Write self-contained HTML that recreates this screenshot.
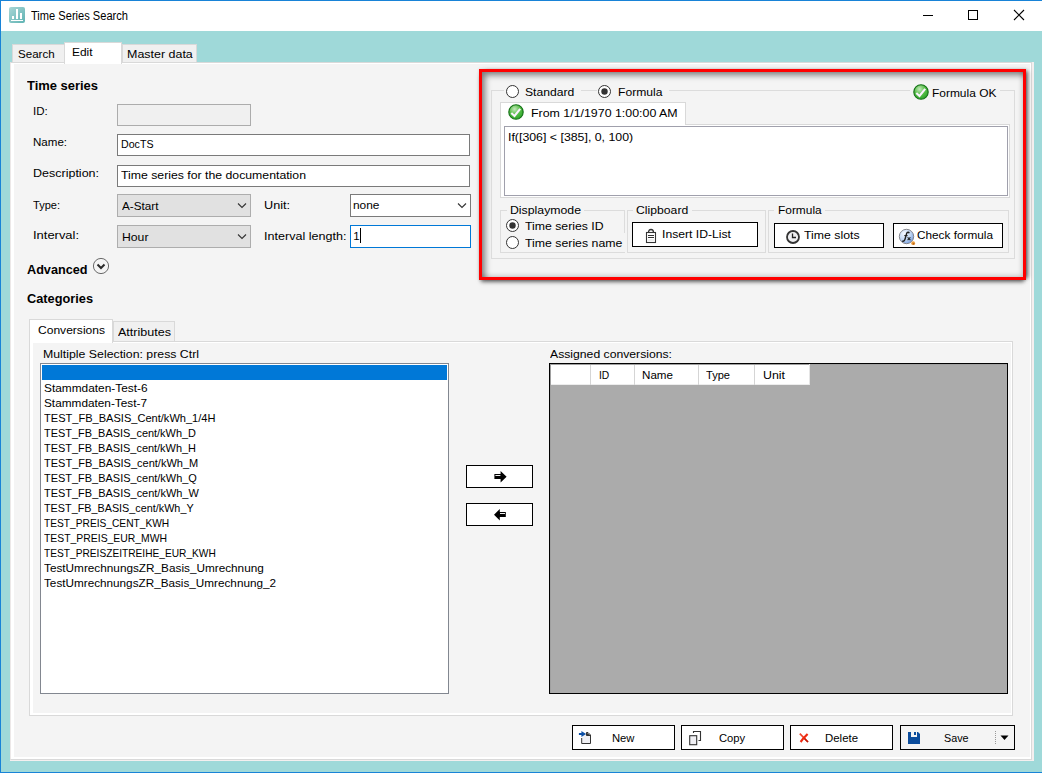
<!DOCTYPE html>
<html><head><meta charset="utf-8"><style>
html,body{margin:0;padding:0;}
body{width:1042px;height:773px;position:relative;overflow:hidden;font-family:"Liberation Sans",sans-serif;color:#000;background:#9fd9d9;}
.a{position:absolute;}
.t{position:absolute;white-space:nowrap;transform-origin:0 0;}
</style></head><body>
<div class="a" style="left:0px;top:0px;width:1042px;height:773px;background:#9fd9d9;"></div>
<div class="a" style="left:0px;top:0px;width:1042px;height:31px;background:#ffffff;"></div>
<div class="a" style="left:0px;top:0px;width:1042px;height:1px;background:#1883d7;"></div>
<div class="a" style="left:0px;top:0px;width:1px;height:773px;background:#1883d7;"></div>
<div class="a" style="left:0px;top:772px;width:1042px;height:1px;background:#1883d7;"></div>
<svg class="a" style="left:9px;top:7px" width="16" height="16" viewBox="0 0 16 16">
<defs><linearGradient id="ig" x1="0" y1="0" x2="1" y2="1"><stop offset="0" stop-color="#a9d6d6"/><stop offset="1" stop-color="#5fb3b3"/></linearGradient></defs>
<rect x="0" y="0" width="16" height="16" rx="2" fill="url(#ig)"/>
<rect x="3" y="9" width="2" height="3" fill="#fff"/><rect x="7" y="2" width="2" height="10" fill="#fff"/><rect x="11" y="6" width="2" height="6" fill="#fff"/>
<rect x="2" y="13" width="12" height="1" fill="#fff"/></svg>
<div class="t" style="left:30.50px;top:6.00px;font-size:12px;line-height:20px;transform:scaleX(0.9242);">Time Series Search</div>
<div class="a" style="left:923px;top:15px;width:10px;height:1px;background:#000;"></div>
<div class="a" style="left:968px;top:10px;width:10px;height:10px;border:1px solid #000;box-sizing:border-box;"></div>
<svg class="a" style="left:1013px;top:9px" width="12" height="12" viewBox="0 0 12 12"><path d="M1 1L11 11M11 1L1 11" stroke="#000" stroke-width="1.1"/></svg>
<div class="a" style="left:10px;top:62px;width:1024px;height:699px;background:#f4efef;"></div>
<div class="a" style="left:10px;top:62px;width:1022px;height:698px;background:#ffffff;border-top:1px solid #d9d9d9;border-right:1px solid #d9d9d9;border-bottom:1px solid #d9d9d9;border-left:1px solid #ece8e8;box-sizing:border-box;"></div>
<div class="a" style="left:14px;top:64px;width:1016px;height:693px;background:#f4f4f4;"></div>
<div class="a" style="left:12px;top:44px;width:53px;height:18px;background:#f0f0f0;border:1px solid #d9d9d9;border-bottom:none;box-sizing:border-box;"></div>
<div class="a" style="left:122px;top:44px;width:75px;height:18px;background:#f0f0f0;border:1px solid #d9d9d9;border-bottom:none;box-sizing:border-box;"></div>
<div class="a" style="left:64px;top:42px;width:58px;height:22px;background:#ffffff;border:1px solid #d9d9d9;border-bottom:none;box-sizing:border-box;"></div>
<div class="t" style="left:17.60px;top:44.00px;font-size:11.5px;line-height:20px;transform:scaleX(1.0069);">Search</div>
<div class="t" style="left:72.40px;top:42.00px;font-size:11.5px;line-height:20px;transform:scaleX(1.0354);">Edit</div>
<div class="t" style="left:126.50px;top:44.00px;font-size:11.5px;line-height:20px;transform:scaleX(1.0831);">Master data</div>
<div class="t" style="left:27.00px;top:76.00px;font-size:12.5px;line-height:20px;font-weight:bold;-webkit-text-stroke:0;transform:scaleX(1.0357);">Time series</div>
<div class="t" style="left:33.25px;top:101.00px;font-size:11.5px;line-height:20px;transform:scaleX(1.0034);">ID:</div>
<div class="t" style="left:33.25px;top:132.00px;font-size:11.5px;line-height:20px;transform:scaleX(1.0044);">Name:</div>
<div class="t" style="left:33.25px;top:163.00px;font-size:11.5px;line-height:20px;transform:scaleX(1.0873);">Description:</div>
<div class="t" style="left:33.25px;top:195.00px;font-size:11.5px;line-height:20px;transform:scaleX(0.9591);">Type:</div>
<div class="t" style="left:33.25px;top:225.00px;font-size:11.5px;line-height:20px;transform:scaleX(1.1247);">Interval:</div>
<div class="a" style="left:117px;top:104px;width:134px;height:22px;background:#f0f0f0;border:1px solid #acacac;box-sizing:border-box;"></div>
<div class="a" style="left:117px;top:134px;width:353px;height:22px;background:#ffffff;border:1px solid #7a7a7a;box-sizing:border-box;"></div>
<div class="t" style="left:120.50px;top:134.00px;font-size:11.5px;line-height:20px;transform:scaleX(0.9246);">DocTS</div>
<div class="a" style="left:117px;top:165px;width:353px;height:22px;background:#ffffff;border:1px solid #7a7a7a;box-sizing:border-box;"></div>
<div class="t" style="left:120.50px;top:165.00px;font-size:11.5px;line-height:20px;transform:scaleX(1.0666);">Time series for the documentation</div>
<div class="a" style="left:117px;top:194px;width:134px;height:23px;background:#e1e1e1;border:1px solid #adadad;box-sizing:border-box;"></div>
<div class="t" style="left:121.50px;top:196.00px;font-size:11.5px;line-height:20px;transform:scaleX(1.0196);">A-Start</div>
<svg class="a" style="left:236.5px;top:203px" width="10" height="6" viewBox="0 0 10 6"><path d="M1 0.5L5 4.5L9 0.5" fill="none" stroke="#333" stroke-width="1.1"/></svg>
<div class="a" style="left:117px;top:225px;width:134px;height:23px;background:#e1e1e1;border:1px solid #adadad;box-sizing:border-box;"></div>
<div class="t" style="left:121.50px;top:227.00px;font-size:11.5px;line-height:20px;transform:scaleX(1.0621);">Hour</div>
<svg class="a" style="left:236.5px;top:234px" width="10" height="6" viewBox="0 0 10 6"><path d="M1 0.5L5 4.5L9 0.5" fill="none" stroke="#333" stroke-width="1.1"/></svg>
<div class="t" style="left:264.20px;top:195.00px;font-size:11.5px;line-height:20px;transform:scaleX(1.0994);">Unit:</div>
<div class="t" style="left:264.20px;top:226.00px;font-size:11.5px;line-height:20px;transform:scaleX(1.0921);">Interval length:</div>
<div class="a" style="left:350px;top:194px;width:121px;height:23px;background:#ffffff;border:1px solid #7a7a7a;box-sizing:border-box;"></div>
<div class="t" style="left:353.30px;top:195.00px;font-size:11.5px;line-height:20px;transform:scaleX(1.0352);">none</div>
<svg class="a" style="left:456.5px;top:203px" width="10" height="6" viewBox="0 0 10 6"><path d="M1 0.5L5 4.5L9 0.5" fill="none" stroke="#333" stroke-width="1.1"/></svg>
<div class="a" style="left:350px;top:225px;width:121px;height:23px;background:#ffffff;border:1px solid #0078d7;box-sizing:border-box;"></div>
<div class="t" style="left:353.30px;top:226.00px;font-size:11.5px;line-height:20px;">1</div>
<div class="a" style="left:360px;top:228px;width:1px;height:15px;background:#000;"></div>
<div class="t" style="left:27.00px;top:260.00px;font-size:12.5px;line-height:20px;font-weight:bold;-webkit-text-stroke:0;transform:scaleX(1.0126);">Advanced</div>
<svg class="a" style="left:92px;top:257px" width="18" height="18" viewBox="0 0 18 18"><circle cx="9" cy="9" r="7.6" fill="none" stroke="#6a6a6a" stroke-width="1"/><path d="M5.5 7.5L9 11L12.5 7.5" fill="none" stroke="#2a2a2a" stroke-width="2"/></svg>
<div class="t" style="left:27.00px;top:289.00px;font-size:12.5px;line-height:20px;font-weight:bold;-webkit-text-stroke:0;transform:scaleX(1.0217);">Categories</div>
<div class="a" style="left:29px;top:341px;width:984px;height:375px;background:#ffffff;border:1px solid #d9d9d9;box-sizing:border-box;"></div>
<div class="a" style="left:33px;top:343px;width:978px;height:370px;background:#f4f4f4;"></div>
<div class="a" style="left:113px;top:321px;width:62px;height:20px;background:#f0f0f0;border:1px solid #d9d9d9;border-bottom:none;box-sizing:border-box;"></div>
<div class="a" style="left:29px;top:319px;width:84px;height:24px;background:#ffffff;border:1px solid #d9d9d9;border-bottom:none;box-sizing:border-box;"></div>
<div class="t" style="left:37.50px;top:320.00px;font-size:11.5px;line-height:20px;transform:scaleX(1.0485);">Conversions</div>
<div class="t" style="left:117.50px;top:322.00px;font-size:11.5px;line-height:20px;transform:scaleX(1.0905);">Attributes</div>
<div class="t" style="left:42.50px;top:344.00px;font-size:11.5px;line-height:20px;transform:scaleX(1.0707);">Multiple Selection: press Ctrl</div>
<div class="a" style="left:40px;top:363px;width:409px;height:331px;background:#ffffff;border:1px solid #828790;box-sizing:border-box;"></div>
<div class="a" style="left:42px;top:365px;width:405px;height:15px;background:#0078d7;"></div>
<div class="t" style="left:44.20px;top:378.00px;font-size:11.5px;line-height:20px;transform:scaleX(1.0314);">Stammdaten-Test-6</div>
<div class="t" style="left:44.20px;top:393.00px;font-size:11.5px;line-height:20px;transform:scaleX(1.0264);">Stammdaten-Test-7</div>
<div class="t" style="left:44.20px;top:408.00px;font-size:11.5px;line-height:20px;transform:scaleX(0.9616);">TEST_FB_BASIS_Cent/kWh_1/4H</div>
<div class="t" style="left:44.20px;top:423.00px;font-size:11.5px;line-height:20px;transform:scaleX(0.9512);">TEST_FB_BASIS_cent/kWh_D</div>
<div class="t" style="left:44.20px;top:438.00px;font-size:11.5px;line-height:20px;transform:scaleX(0.9512);">TEST_FB_BASIS_cent/kWh_H</div>
<div class="t" style="left:44.20px;top:453.00px;font-size:11.5px;line-height:20px;transform:scaleX(0.9575);">TEST_FB_BASIS_cent/kWh_M</div>
<div class="t" style="left:44.20px;top:468.00px;font-size:11.5px;line-height:20px;transform:scaleX(0.9529);">TEST_FB_BASIS_cent/kWh_Q</div>
<div class="t" style="left:44.20px;top:483.00px;font-size:11.5px;line-height:20px;transform:scaleX(0.9535);">TEST_FB_BASIS_cent/kWh_W</div>
<div class="t" style="left:44.20px;top:498.00px;font-size:11.5px;line-height:20px;transform:scaleX(0.9400);">TEST_FB_BASIS_cent/kWh_Y</div>
<div class="t" style="left:44.20px;top:513.00px;font-size:11.5px;line-height:20px;transform:scaleX(0.8867);">TEST_PREIS_CENT_KWH</div>
<div class="t" style="left:44.20px;top:528.00px;font-size:11.5px;line-height:20px;transform:scaleX(0.9045);">TEST_PREIS_EUR_MWH</div>
<div class="t" style="left:44.20px;top:543.00px;font-size:11.5px;line-height:20px;transform:scaleX(0.8844);">TEST_PREISZEITREIHE_EUR_KWH</div>
<div class="t" style="left:44.20px;top:558.00px;font-size:11.5px;line-height:20px;transform:scaleX(1.0235);">TestUmrechnungsZR_Basis_Umrechnung</div>
<div class="t" style="left:44.20px;top:573.00px;font-size:11.5px;line-height:20px;transform:scaleX(1.0196);">TestUmrechnungsZR_Basis_Umrechnung_2</div>
<div class="a" style="left:466px;top:465px;width:67px;height:23px;background:#ffffff;border:1px solid #000;box-sizing:border-box;"></div>
<div class="a" style="left:466px;top:503px;width:67px;height:23px;background:#ffffff;border:1px solid #000;box-sizing:border-box;"></div>
<svg class="a" style="left:493px;top:470px" width="16" height="14" viewBox="0 0 16 14"><path d="M1.4 4H7.6V1L13.6 6.8L7.6 12.6V9H1.4Z" fill="#000"/><rect x="2.4" y="5" width="5" height="1" fill="#eee"/></svg>
<svg class="a" style="left:492px;top:508px" width="16" height="14" viewBox="0 0 16 14"><path d="M13.8 4H7.8V1L2 6.8L7.8 12.6V9H13.8Z" fill="#000"/><rect x="8" y="5" width="5" height="1" fill="#eee"/></svg>
<div class="t" style="left:550.20px;top:344.00px;font-size:11.5px;line-height:20px;transform:scaleX(1.0604);">Assigned conversions:</div>
<div class="a" style="left:549px;top:363px;width:459px;height:331px;background:#ababab;border:1px solid #000;box-sizing:border-box;"></div>
<div class="a" style="left:550px;top:365px;width:260px;height:20px;background:#ffffff;"></div>
<div class="a" style="left:550px;top:364px;width:457px;height:1px;background:#a0a0a0;"></div>
<div class="a" style="left:550px;top:364px;width:1px;height:329px;background:#a0a0a0;"></div>
<div class="a" style="left:551px;top:384px;width:259px;height:1px;background:#ececec;"></div>
<div class="a" style="left:590px;top:365px;width:1px;height:20px;background:#d5d5d5;"></div>
<div class="a" style="left:634px;top:365px;width:1px;height:20px;background:#d5d5d5;"></div>
<div class="a" style="left:698px;top:365px;width:1px;height:20px;background:#d5d5d5;"></div>
<div class="a" style="left:754px;top:365px;width:1px;height:20px;background:#d5d5d5;"></div>
<div class="a" style="left:809px;top:364px;width:1px;height:21px;background:#e5e5e5;"></div>
<div class="t" style="left:598.70px;top:365.00px;font-size:11.5px;line-height:20px;transform:scaleX(0.8957);">ID</div>
<div class="t" style="left:642.30px;top:365.00px;font-size:11.5px;line-height:20px;transform:scaleX(1.0098);">Name</div>
<div class="t" style="left:706.00px;top:365.00px;font-size:11.5px;line-height:20px;transform:scaleX(0.9619);">Type</div>
<div class="t" style="left:762.50px;top:365.00px;font-size:11.5px;line-height:20px;transform:scaleX(1.0758);">Unit</div>
<div class="a" style="left:572px;top:725px;width:103px;height:25px;background:#fff;border:1px solid #000;box-sizing:border-box;"></div>
<div class="a" style="left:681px;top:725px;width:103px;height:25px;background:#fff;border:1px solid #000;box-sizing:border-box;"></div>
<div class="a" style="left:790px;top:725px;width:103px;height:25px;background:#fff;border:1px solid #000;box-sizing:border-box;"></div>
<div class="a" style="left:900px;top:725px;width:115px;height:25px;background:#f4f4f4;border:1px solid #000;box-sizing:border-box;"></div>
<div class="t" style="left:611.50px;top:728.00px;font-size:11.5px;line-height:20px;transform:scaleX(0.9761);">New</div>
<div class="t" style="left:718.50px;top:728.00px;font-size:11.5px;line-height:20px;transform:scaleX(0.9758);">Copy</div>
<div class="t" style="left:824.70px;top:728.00px;font-size:11.5px;line-height:20px;transform:scaleX(0.9925);">Delete</div>
<div class="t" style="left:944.00px;top:728.00px;font-size:11.5px;line-height:20px;transform:scaleX(0.9389);">Save</div>
<svg class="a" style="left:578px;top:730px" width="14" height="15" viewBox="0 0 14 15"><path d="M3.7 8V13.5H12.5V5L10 2.5H8.5" fill="#f0f0f4" stroke="#333" stroke-width="1"/><path d="M8.5 2.5V5.5H12.5" fill="#333" stroke="#333" stroke-width="1"/><path d="M0.9 2.9H3.4V0.9L8.1 4L3.4 7.1V5.1H0.9Z" fill="#0c4fa6"/></svg>
<svg class="a" style="left:688px;top:730px" width="14" height="16" viewBox="0 0 14 16"><path d="M5.5 3V1.5H12.5V10.5H10.5" fill="none" stroke="#333" stroke-width="1.1"/><rect x="1.7" y="5.7" width="7" height="9" fill="#f0f0f4" stroke="#333" stroke-width="1.1"/></svg>
<svg class="a" style="left:798px;top:732px" width="12" height="12" viewBox="0 0 12 12"><path d="M1.8 1.6L10 10" stroke="#f0452a" stroke-width="1.7"/><path d="M9.6 2L5 6.8L2.6 10" stroke="#f02a10" stroke-width="2.1"/><path d="M6.5 6.5L10 10" stroke="#c01808" stroke-width="1.5"/></svg>
<svg class="a" style="left:908px;top:732px" width="12" height="12" viewBox="0 0 12 12"><path d="M0 0H3V5H9V0H10L12 2V12H0Z" fill="#0b4c9c"/><rect x="6" y="0" width="2" height="3" fill="#0b4c9c"/></svg>
<svg class="a" style="left:995px;top:731px" width="1" height="13"><path d="M0.5 0V13" stroke="#999" stroke-dasharray="1 1"/></svg>
<svg class="a" style="left:1000px;top:735px" width="9" height="6" viewBox="0 0 9 6"><path d="M0.5 0.5H8.5L4.5 5Z" fill="#000"/></svg>
<div class="a" style="left:482px;top:72px;width:541px;height:205px;box-shadow: inset 5px 5px 6px -2px rgba(0,0,0,0.5), inset -3px -3px 5px -2px rgba(0,0,0,0.22);"></div>
<div class="a" style="left:479px;top:69px;width:547px;height:211px;border:3px solid #ff0000;box-sizing:border-box;box-shadow: 0 0 3px rgba(0,0,0,0.15), 4px 0 4px -2px rgba(0,0,0,0.55), 0 4px 4px -2px rgba(0,0,0,0.55);"></div>
<div class="a" style="left:491px;top:90px;width:524px;height:169px;border:1px solid #dcdcdc;box-sizing:border-box;"></div>
<div class="a" style="left:504px;top:84px;width:77px;height:16px;background:#f4f4f4;"></div>
<div class="a" style="left:597px;top:84px;width:72px;height:16px;background:#f4f4f4;"></div>
<div class="a" style="left:910px;top:84px;width:90px;height:16px;background:#f4f4f4;"></div>
<svg class="a" style="left:506px;top:85px" width="13" height="13" viewBox="0 0 13 13"><circle cx="6.5" cy="6.5" r="6" fill="#fff" stroke="#333" stroke-width="1"/></svg>
<div class="t" style="left:525.10px;top:82.00px;font-size:11.5px;line-height:20px;transform:scaleX(1.0557);">Standard</div>
<svg class="a" style="left:598px;top:85px" width="13" height="13" viewBox="0 0 13 13"><circle cx="6.5" cy="6.5" r="6" fill="#fff" stroke="#333" stroke-width="1"/><circle cx="6.5" cy="6.5" r="3.2" fill="#333"/></svg>
<div class="t" style="left:617.50px;top:82.00px;font-size:11.5px;line-height:20px;transform:scaleX(1.0545);">Formula</div>
<svg class="a" style="left:913px;top:84px" width="16" height="16" viewBox="0 0 16 16"><defs><radialGradient id="cg913" cx="0.4" cy="0.3" r="0.8"><stop offset="0" stop-color="#c4e8bc"/><stop offset="0.45" stop-color="#5cc04c"/><stop offset="1" stop-color="#22a022"/></radialGradient></defs><circle cx="8" cy="8" r="7.2" fill="url(#cg913)" stroke="#127015" stroke-width="1.1"/><path d="M3.3 9L6.5 12L12.2 4.8" fill="none" stroke="#fbf2ff" stroke-width="2.1"/></svg>
<div class="t" style="left:932.30px;top:83.00px;font-size:11.5px;line-height:20px;transform:scaleX(1.0387);">Formula OK</div>
<div class="a" style="left:500px;top:124px;width:510px;height:74px;background:#ffffff;border:1px solid #d9d9d9;box-sizing:border-box;"></div>
<div class="a" style="left:500px;top:102px;width:186px;height:23px;background:#ffffff;border:1px solid #d9d9d9;border-bottom:none;box-sizing:border-box;"></div>
<svg class="a" style="left:508px;top:104px" width="16" height="16" viewBox="0 0 16 16"><defs><radialGradient id="cg508" cx="0.4" cy="0.3" r="0.8"><stop offset="0" stop-color="#c4e8bc"/><stop offset="0.45" stop-color="#5cc04c"/><stop offset="1" stop-color="#22a022"/></radialGradient></defs><circle cx="8" cy="8" r="7.2" fill="url(#cg508)" stroke="#127015" stroke-width="1.1"/><path d="M3.3 9L6.5 12L12.2 4.8" fill="none" stroke="#fbf2ff" stroke-width="2.1"/></svg>
<div class="t" style="left:530.70px;top:103.00px;font-size:11.5px;line-height:20px;transform:scaleX(1.0768);">From 1/1/1970 1:00:00 AM</div>
<div class="a" style="left:504px;top:126px;width:504px;height:70px;background:#ffffff;border:1px solid #a0a0ac;box-sizing:border-box;"></div>
<div class="t" style="left:507.80px;top:127.00px;font-size:11.5px;line-height:20px;transform:scaleX(1.0728);">If([306] &lt; [385], 0, 100)</div>
<div class="a" style="left:500px;top:210px;width:125px;height:43px;border:1px solid #dcdcdc;box-sizing:border-box;"></div>
<div class="a" style="left:627px;top:210px;width:139px;height:43px;border:1px solid #dcdcdc;box-sizing:border-box;"></div>
<div class="a" style="left:768px;top:210px;width:241px;height:43px;border:1px solid #dcdcdc;box-sizing:border-box;"></div>
<div class="a" style="left:507px;top:204px;width:77px;height:12px;background:#f4f4f4;"></div>
<div class="a" style="left:633px;top:204px;width:59px;height:12px;background:#f4f4f4;"></div>
<div class="a" style="left:774px;top:204px;width:51px;height:12px;background:#f4f4f4;"></div>
<div class="t" style="left:509.70px;top:200.00px;font-size:11.5px;line-height:20px;transform:scaleX(1.0685);">Displaymode</div>
<div class="t" style="left:636.10px;top:200.00px;font-size:11.5px;line-height:20px;transform:scaleX(1.0610);">Clipboard</div>
<div class="t" style="left:777.60px;top:200.00px;font-size:11.5px;line-height:20px;transform:scaleX(1.0355);">Formula</div>
<div class="a" style="left:580px;top:233px;width:45px;height:19px;background:#f4f4f4;"></div>
<svg class="a" style="left:506px;top:219px" width="13" height="13" viewBox="0 0 13 13"><circle cx="6.5" cy="6.5" r="6" fill="#fff" stroke="#333" stroke-width="1"/><circle cx="6.5" cy="6.5" r="3.2" fill="#333"/></svg>
<div class="t" style="left:525.20px;top:216.00px;font-size:11.5px;line-height:20px;transform:scaleX(1.0665);">Time series ID</div>
<svg class="a" style="left:506px;top:236px" width="13" height="13" viewBox="0 0 13 13"><circle cx="6.5" cy="6.5" r="6" fill="#fff" stroke="#333" stroke-width="1"/></svg>
<div class="t" style="left:525.20px;top:233.00px;font-size:11.5px;line-height:20px;transform:scaleX(1.0698);">Time series name</div>
<div class="a" style="left:632px;top:222px;width:126px;height:25px;background:#ffffff;border:1px solid #000;box-sizing:border-box;"></div>
<div class="a" style="left:774px;top:223px;width:110px;height:25px;background:#ffffff;border:1px solid #000;box-sizing:border-box;"></div>
<div class="a" style="left:893px;top:223px;width:110px;height:25px;background:#ffffff;border:1px solid #000;box-sizing:border-box;"></div>
<div class="t" style="left:661.80px;top:224.00px;font-size:11.5px;line-height:20px;transform:scaleX(1.0583);">Insert ID-List</div>
<div class="t" style="left:803.80px;top:225.00px;font-size:11.5px;line-height:20px;transform:scaleX(1.0683);">Time slots</div>
<div class="t" style="left:917.20px;top:225.00px;font-size:11.5px;line-height:20px;transform:scaleX(1.0249);">Check formula</div>
<svg class="a" style="left:645px;top:228px" width="12" height="16" viewBox="0 0 12 16"><rect x="1.5" y="4.5" width="9" height="10" fill="#fff" stroke="#333" stroke-width="1.1"/><path d="M3.5 4.5C3.5 2.5 4.5 1.5 6 1.5C7.5 1.5 8.5 2.5 8.5 4.5" fill="none" stroke="#333" stroke-width="1.3"/><path d="M3 7.5H9M3 9.5H9" stroke="#333" stroke-width="1"/><rect x="3" y="11" width="6" height="2" fill="#eee"/></svg>
<svg class="a" style="left:785px;top:229px" width="16" height="16" viewBox="0 0 16 16"><circle cx="8" cy="8" r="6" fill="#eeeef0" stroke="#333" stroke-width="1.8"/><path d="M7.5 4.5V8.5H11" fill="none" stroke="#222" stroke-width="1.3"/></svg>
<svg class="a" style="left:898px;top:228px" width="18" height="18" viewBox="0 0 18 18"><defs><radialGradient id="fxg" cx="0.35" cy="0.3" r="0.85"><stop offset="0" stop-color="#f6f9ff"/><stop offset="0.55" stop-color="#bcd3f2"/><stop offset="0.9" stop-color="#6f98dc"/><stop offset="1" stop-color="#2e5fc0"/></radialGradient></defs><circle cx="8.5" cy="8.5" r="7.2" fill="url(#fxg)" stroke="#7a7a80" stroke-width="0.9"/><path d="M11.2 5.2C10.8 3.9 9.2 3.9 8.6 5.6L7 11.2C6.6 12.8 5.6 13.6 4.3 13" fill="none" stroke="#1e1e1e" stroke-width="1.4"/><path d="M6.3 7.6H9.6" stroke="#1e1e1e" stroke-width="1.1"/><path d="M9.6 9.4L12.4 12.2M12.4 9.4L9.6 12.2" stroke="#1e1e1e" stroke-width="1.1"/><circle cx="15.2" cy="15.2" r="1.9" fill="#e99a3a"/><circle cx="15.6" cy="15.8" r="0.9" fill="#b8641c"/></svg>
</body></html>
